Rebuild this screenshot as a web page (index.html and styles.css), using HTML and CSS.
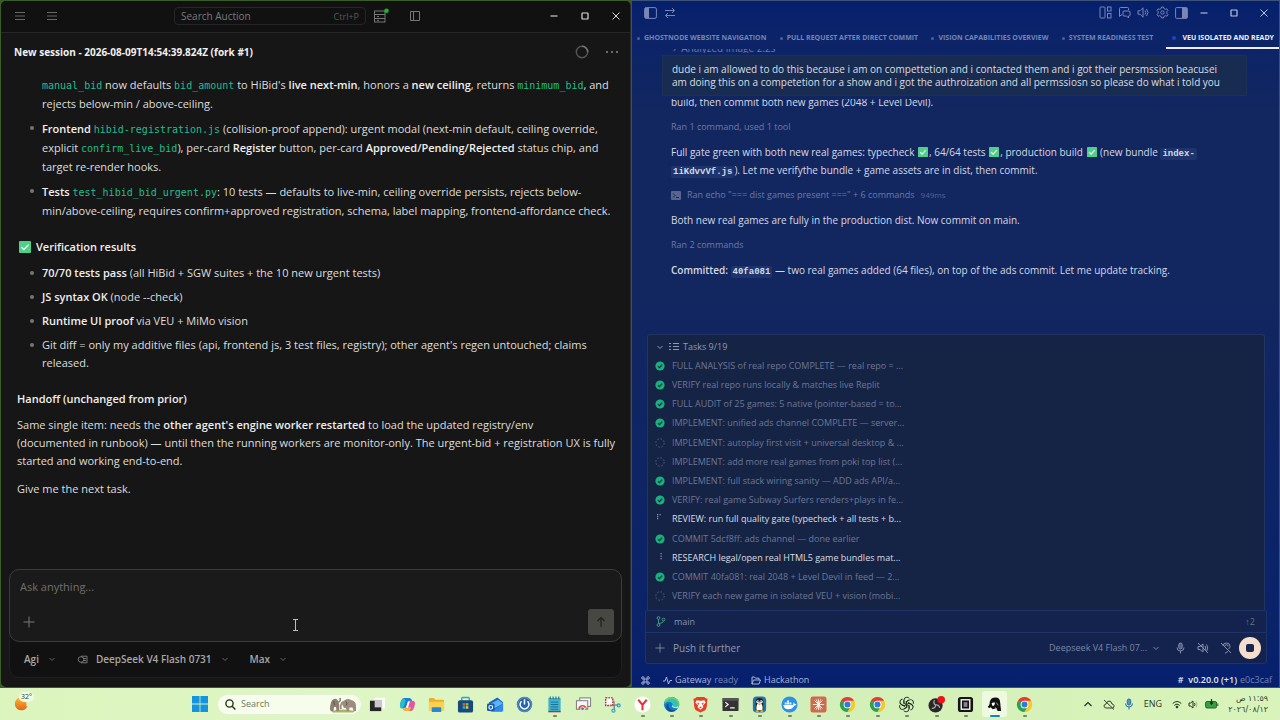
FILE: index.html
```html
<!DOCTYPE html>
<html lang="en">
<head>
<meta charset="utf-8">
<title>Desktop</title>
<link rel="stylesheet" href="styles.css">
</head>
<body>
<svg class="defs" aria-hidden="true">
  <symbol id="check" viewBox="0 0 12 12"><rect width="12" height="12" rx="1" fill="#4fd08a"/><path d="M2.5 6.2l2.4 2.4 4.6-5" fill="none" stroke="#fff" stroke-width="1.3"/></symbol>
  <symbol id="done" viewBox="0 0 10 10"><circle cx="5" cy="5" r="4.6" fill="#18b07c"/><path d="M3 5.1l1.5 1.5 2.7-3" fill="none" stroke="#10264a" stroke-width="1.1"/></symbol>
  <symbol id="todo" viewBox="0 0 10 10"><circle cx="5" cy="5" r="4.2" fill="none" stroke="#5a6686" stroke-width=".9" stroke-dasharray="1.6 1.7"/></symbol>
  <symbol id="chev" viewBox="0 0 10 10"><path d="M2.5 4l2.5 2.5L7.500 4" fill="none" stroke="currentColor"/></symbol>
  <symbol id="min" viewBox="0 0 10 10"><path d="M1.500 5h7" stroke="currentColor" stroke-width="1.100"/></symbol>
  <symbol id="max" viewBox="0 0 10 10"><rect x="2" y="2" width="6" height="6" rx=".6" fill="none" stroke="currentColor" stroke-width="1.200"/></symbol>
  <symbol id="close" viewBox="0 0 10 10"><path d="M1.500 1.500l7 7M8.500 1.500l-7 7" stroke="currentColor"/></symbol>
  <symbol id="plus" viewBox="0 0 12 12"><path d="M6 .5v11M.5 6h11" stroke="currentColor"/></symbol>
  <symbol id="menu" viewBox="0 0 12 12"><path d="M1 2.500h10M1 6h10M1 9.500h10" stroke="currentColor"/></symbol>
  <symbol id="chrome" viewBox="0 0 18 18"><circle cx="9" cy="9" r="8" fill="#f6c829"/><path d="M9 9L2.070 5A8 8 0 0 1 15.930 5Z" fill="#df3f32"/><path d="M9 9L2.070 5A8 8 0 0 0 9 17L12.500 11Z" fill="#28a24b"/><path d="M9 5h6.930A8 8 0 0 1 9 17l3.500-6z" fill="#f6c829"/><circle cx="9" cy="9" r="4.100" fill="#fff"/><circle cx="9" cy="9" r="3.200" fill="#3079e0"/></symbol>
</svg>

<main class="desktop">
  <section class="win agent" aria-label="Auction">
    <header class="bar">
      <div class="bar-side menus">
        <button aria-label="Menu"><svg class="i12"><use href="#menu"/></svg></button>
        <button aria-label="Sessions"><svg class="i12"><use href="#menu"/></svg></button>
      </div>
      <label class="find"><input type="text" placeholder="Search Auction" aria-label="Search Auction"><kbd>Ctrl+P</kbd></label>
      <div class="bar-side tools">
        <button aria-label="Server status"><svg width="16" height="16" viewBox="0 0 16 16" fill="none" stroke="#777"><rect x="1.500" y="3" width="10.500" height="11"/><path d="M1.500 6.500H12M1.500 10.500H12M4 8.500h2M4 12.300h2"/><circle cx="13.500" cy="2.800" r="2.300" fill="#16b52a" stroke="none"/></svg></button>
        <button aria-label="Toggle sidebar"><svg width="12" height="12" viewBox="0 0 12 12" fill="none" stroke="#777"><path d="M1.500 1.500h9v9h-9zM4.500 1.500v9"/></svg></button>
      </div>
      <div class="winctl">
        <button aria-label="Minimize"><svg class="i10"><use href="#min"/></svg></button>
        <button aria-label="Maximize"><svg class="i10"><use href="#max"/></svg></button>
        <button aria-label="Close"><svg class="i10"><use href="#close"/></svg></button>
      </div>
    </header>
    <div class="session">
      <h1>New session - 2026-08-09T14:54:39.824Z (fork #1)</h1>
      <div class="session-tools">
        <svg width="14" height="14" viewBox="0 0 14 14" fill="none" stroke-width="1.400"><circle cx="7" cy="7" r="5.700" stroke="#575757"/><path d="M7 1.300A5.700 5.700 0 0 1 12.700 7" stroke="#777"/></svg>
        <button aria-label="More"><svg width="14" height="4" viewBox="0 0 14 4" fill="#8a8a8a"><circle cx="2" cy="2" r="1"/><circle cx="7" cy="2" r="1"/><circle cx="12" cy="2" r="1"/></svg></button>
      </div>
    </div>
    <article class="reply">
      <ul class="roomy">
        <li class="nodot"><code>manual_bid</code> now defaults <code>bid_amount</code> to HiBid's <b>live next-min</b>, honors a <b>new ceiling</b>, returns <code>minimum_bid</code>, and<br>rejects below-min / above-ceiling.</li>
        <li><b>Frontend</b> <code>hibid-registration.js</code> (collision-proof append): urgent modal (next-min default, ceiling override,<br>explicit <code>confirm_live_bid</code>), per-card <b>Register</b> button, per-card <b>Approved/Pending/Rejected</b> status chip, and<br>target re-render hooks.</li>
        <li><b>Tests</b> <code>test_hibid_bid_urgent.py</code>: 10 tests — defaults to live-min, ceiling override persists, rejects below-<br>min/above-ceiling, requires confirm+approved registration, schema, label mapping, frontend-affordance check.</li>
      </ul>
      <h2><svg class="i12"><use href="#check"/></svg>Verification results</h2>
      <ul>
        <li><b>70/70 tests pass</b> (all HiBid + SGW suites + the 10 new urgent tests)</li>
        <li><b>JS syntax OK</b> (node --check)</li>
        <li><b>Runtime UI proof</b> via VEU + MiMo vision</li>
        <li>Git diff = only my additive files (api, frontend js, 3 test files, registry); other agent's regen untouched; claims<br>released.</li>
      </ul>
      <h2>Handoff (unchanged from prior)</h2>
      <p>Same single item: needs the <b>other agent's engine worker restarted</b> to load the updated registry/env<br>(documented in runbook) — until then the running workers are monitor-only. The urgent-bid + registration UX is fully<br>started and working end-to-end.</p>
      <p>Give me the next task.</p>
    </article>
    <form class="composer">
      <div class="ask">
        <textarea rows="1" placeholder="Ask anything..." aria-label="Ask anything"></textarea>
        <div class="ask-row">
          <button type="button" aria-label="Attach"><svg class="i12"><use href="#plus"/></svg></button>
          <button type="button" class="send" aria-label="Send"><svg width="14" height="14" viewBox="0 0 14 14" fill="none" stroke="#20201f" stroke-width="1.200"><path d="M7 12V2.500M3.500 6L7 2.500 10.500 6"/></svg></button>
        </div>
        <svg class="ibeam" width="7" height="12" viewBox="0 0 7 12" fill="none" stroke="#bdbdbd"><path d="M1 .5h5M3.500.5v11M1 11.500h5"/></svg>
      </div>
      <div class="modes">
        <button type="button">Agi<svg class="i10"><use href="#chev"/></svg></button>
        <button type="button"><svg class="glyph" width="11" height="9" viewBox="0 0 11 9" fill="none" stroke="#777"><circle cx="4" cy="4.500" r="2.800"/><path d="M4 1.200h6v6.600H4M7 3.500h2M7 5.500h2"/></svg>DeepSeek V4 Flash 0731<svg class="i10"><use href="#chev"/></svg></button>
        <button type="button">Max<svg class="i10"><use href="#chev"/></svg></button>
      </div>
    </form>
  </section>

  <section class="win blue" aria-label="Hackathon">
    <header class="bbar">
      <div class="bleft">
        <button aria-label="Left panel"><svg width="13" height="12" viewBox="0 0 13 12"><rect x=".6" y=".6" width="11.800" height="10.800" rx="1.500" fill="none" stroke="currentColor"/><path d="M1 1h4v10H1z" fill="currentColor"/></svg></button>
        <button aria-label="Swap"><svg width="12" height="12" viewBox="0 0 12 12" fill="none" stroke="currentColor"><path d="M1 3.500h9.500M8 1l2.500 2.500L8 6M11 8.500H1.500M4 6L1.500 8.500 4 11"/></svg></button>
      </div>
      <div class="bright">
        <button aria-label="Layout"><svg width="13" height="13" viewBox="0 0 13 13" fill="none" stroke="currentColor"><rect x="1" y="1" width="5" height="11" rx=".7"/><rect x="8.500" y="1" width="3.500" height="4"/><rect x="8.500" y="7.500" width="3.500" height="4.500"/></svg></button>
        <button aria-label="Chat"><svg width="13" height="13" viewBox="0 0 13 13" fill="none" stroke="currentColor"><path d="M4 9H3l-1.500 1.500V2.500a1 1 0 0 1 1-1h7a1 1 0 0 1 1 1V4M6 5h5a1 1 0 0 1 1 1v3a1 1 0 0 1-1 1h-.5v2L8.500 10H6a1 1 0 0 1-1-1V6a1 1 0 0 1 1-1z"/></svg></button>
        <button aria-label="Sound"><svg width="13" height="13" viewBox="0 0 13 13" fill="none" stroke="currentColor"><path d="M1 4.800h2l3-3v9.400l-3-3H1zM8 4.500q1.500 2 0 4M9.500 3q3 3.500 0 7"/></svg></button>
        <button aria-label="Settings"><svg width="13" height="13" viewBox="0 0 13 13" fill="none" stroke="currentColor"><path d="M5.500 1h2l.4 1.500 1.500.8 1.500-.5 1 1.700-1.100 1.200v1.600l1.100 1.200-1 1.700-1.500-.5-1.500.8L7.500 12h-2l-.4-1.500-1.500-.8-1.500.5-1-1.700 1.100-1.200V5.700L1.100 4.500l1-1.700 1.500.5 1.500-.8z"/><circle cx="6.500" cy="6.500" r="1.700"/></svg></button>
        <button aria-label="Right panel"><svg width="13" height="12" viewBox="0 0 13 12"><rect x=".6" y=".6" width="11.800" height="10.800" rx="1" fill="none" stroke="currentColor"/><path d="M7 1h5v10H7z" fill="currentColor"/></svg></button>
      </div>
      <div class="winctl">
        <button aria-label="Minimize"><svg class="i10"><use href="#min"/></svg></button>
        <button aria-label="Maximize"><svg class="i10"><use href="#max"/></svg></button>
        <button aria-label="Close"><svg class="i10"><use href="#close"/></svg></button>
      </div>
    </header>
    <nav class="tabs">
      <a href="#">Ghostnode website navigation</a>
      <a href="#">Pull request after direct commit</a>
      <a href="#">Vision capabilities overview</a>
      <a href="#">System readiness test</a>
      <a href="#" class="on" aria-current="page">VEU isolated and ready</a>
    </nav>
    <div class="chat">
      <div class="peek peek-top"><span>›&nbsp; Analyzed image 2.2s</span></div>
      <div class="bubble">dude i am allowed to do this because i am on compettetion and i contacted them and i got their persmssion beacusei<br>am doing this on a competetion for a show and i got the authroization and all permssiosn so please do what i told you</div>
      <div class="log">
        <div class="peek peek-msg"><span>build, then commit both new games (2048 + Level Devil).</span></div>
        <p class="ran">Ran 1 command, used 1 tool</p>
        <p>Full gate green with both new real games: typecheck <svg class="em"><use href="#check"/></svg>, 64/64 tests <svg class="em"><use href="#check"/></svg>, production build <svg class="em"><use href="#check"/></svg> (new bundle <code>index-</code><br><code>1iKdvvVf.js</code>). Let me verifythe bundle + game assets are in dist, then commit.</p>
        <p class="ran"><svg width="10" height="9" viewBox="0 0 10 9"><rect width="10" height="9" rx="1" fill="#58668f"/><path d="M2 2.500l2 2-2 2M5 6.500h3" fill="none" stroke="#122760"/></svg>Ran echo "=== dist games present ===" + 6 commands <small>949ms</small></p>
        <p>Both new real games are fully in the production dist. Now commit on main.</p>
        <p class="ran">Ran 2 commands</p>
        <p><b>Committed:</b> <code>40fa081</code> — two real games added (64 files), on top of the ads commit. Let me update tracking.</p>
      </div>
    </div>
    <section class="tasks">
      <button class="tasks-head"><svg class="i10"><use href="#chev"/></svg><svg width="10" height="9" viewBox="0 0 10 9" fill="none" stroke="currentColor"><path d="M4 1.500h6M4 4.500h6M4 7.500h6M0 1.500h2M0 4.500h2M0 7.500h2"/></svg>Tasks 9/19</button>
      <ul>
        <li><svg class="i10"><use href="#done"/></svg>FULL ANALYSIS of real repo COMPLETE — real repo = ...</li>
        <li><svg class="i10"><use href="#done"/></svg>VERIFY real repo runs locally &amp; matches live Replit</li>
        <li><svg class="i10"><use href="#done"/></svg>FULL AUDIT of 25 games: 5 native (pointer-based = to...</li>
        <li><svg class="i10"><use href="#done"/></svg>IMPLEMENT: unified ads channel COMPLETE — server...</li>
        <li><svg class="i10"><use href="#todo"/></svg>IMPLEMENT: autoplay first visit + universal desktop &amp; ...</li>
        <li><svg class="i10"><use href="#todo"/></svg>IMPLEMENT: add more real games from poki top list (...</li>
        <li><svg class="i10"><use href="#done"/></svg>IMPLEMENT: full stack wiring sanity — ADD ads API/a...</li>
        <li><svg class="i10"><use href="#done"/></svg>VERIFY: real game Subway Surfers renders+plays in fe...</li>
        <li class="live"><svg class="i10" viewBox="0 0 10 10" fill="#8f99b3"><path d="M2 0h1.200v1.200H2zM4.500 0h1.200v1.200H4.500zM2 2h1.200v1.200H2zM2 4h1.200v1.200H2z"/></svg>REVIEW: run full quality gate (typecheck + all tests + b...</li>
        <li><svg class="i10"><use href="#done"/></svg>COMMIT 5dcf8ff: ads channel — done earlier</li>
        <li class="live"><svg class="i10" viewBox="0 0 10 10" fill="#8f99b3"><path d="M5.500 0h1.200v1.200H5.500zM5.500 2.500h1.200v1.200H5.500zM5.500 5h1.200v1.200H5.500z"/></svg>RESEARCH legal/open real HTML5 game bundles mat...</li>
        <li><svg class="i10"><use href="#done"/></svg>COMMIT 40fa081: real 2048 + Level Devil in feed — 2...</li>
        <li><svg class="i10"><use href="#todo"/></svg>VERIFY each new game in isolated VEU + vision (mobi...</li>
      </ul>
    </section>
    <form class="push">
      <div class="branch"><svg width="10" height="11" viewBox="0 0 10 11" fill="none" stroke="#459686"><circle cx="2.500" cy="2" r="1.400"/><circle cx="2.500" cy="9" r="1.400"/><circle cx="7.500" cy="3.500" r="1.400"/><path d="M2.500 3.500v4M7.500 5q0 2-4.500 2.500"/></svg><span>main</span><span class="ahead">↑2</span></div>
      <div class="push-row">
        <button type="button" aria-label="Add"><svg class="i10" viewBox="0 0 12 12"><use href="#plus"/></svg></button>
        <input type="text" placeholder="Push it further" aria-label="Message">
        <button type="button" class="model">Deepseek V4 Flash 07...<svg class="i10"><use href="#chev"/></svg></button>
        <div class="voice">
          <button type="button" aria-label="Dictate"><svg width="11" height="12" viewBox="0 0 11 12" fill="none" stroke="currentColor"><rect x="3.800" y="1" width="3.400" height="6" rx="1.700" fill="currentColor" fill-opacity=".5"/><path d="M2 5.500q0 3.500 3.500 3.500T9 5.500M5.500 9v2.500"/></svg></button>
          <button type="button" aria-label="Mute"><svg width="12" height="12" viewBox="0 0 12 12" fill="none" stroke="currentColor"><path d="M1 4.500h2l3-2.500v8L3 7.500H1zM8 4q1.500 2 0 4M9.500 2.500q2.500 3.500 0 7M1 1l10 10"/></svg></button>
          <button type="button" aria-label="Hands free"><svg width="12" height="12" viewBox="0 0 12 12" fill="none" stroke="currentColor"><path d="M3 4q0-3 3.500-3T10 4.500Q10 6 8.500 7M5 4q0-1.300 1.500-1.300T8 4.500M5 11q2 .5 2.500-2M1 1l10 10"/></svg></button>
          <button type="button" class="stop" aria-label="Stop"><i></i></button>
        </div>
      </div>
    </form>
    <footer class="status">
      <svg width="9" height="9" viewBox="0 0 9 9" fill="none" stroke="#aab5d8"><path d="M3 3h3v3H3z"/><circle cx="1.900" cy="1.900" r="1.200"/><circle cx="7.100" cy="1.900" r="1.200"/><circle cx="1.900" cy="7.100" r="1.200"/><circle cx="7.100" cy="7.100" r="1.200"/></svg>
      <span><svg width="9" height="9" viewBox="0 0 9 9" fill="none" stroke="#aab5d8"><path d="M0 5h2l1.500-4 2 7L7 4.500h2"/></svg><b>Gateway</b> ready</span>
      <span><svg width="10" height="9" viewBox="0 0 10 9" fill="none" stroke="#aab5d8"><path d="M1 8V1h2.500l1 1.200H8V4M1 8l1.500-4h7L8 8z"/></svg><b>Hackathon</b></span>
      <span class="version"><strong># &nbsp;v0.20.0 (+1)</strong> e0c3caf</span>
    </footer>
  </section>
</main>

<footer class="taskbar">
  <button class="weather" aria-label="Weather"><svg width="14" height="14" viewBox="0 0 14 14"><defs><linearGradient id="sun" x2="0" y2="1"><stop stop-color="#f8b02c"/><stop offset="1" stop-color="#e5661c"/></linearGradient></defs><path d="M5 .8A6.500 6.500 0 1 0 13.500 9 7 7 0 0 1 5 .8z" fill="url(#sun)"/><circle cx="7" cy="7.500" r="5.500" fill="url(#sun)"/></svg><span>32°</span></button>
  <button class="start" aria-label="Start"><svg width="16" height="16" viewBox="0 0 16 16" fill="#1593dc"><path d="M0 0h7.600v7.600H0zM8.400 0H16v7.600H8.400zM0 8.400h7.600V16H0zM8.400 8.400H16V16H8.400z"/></svg></button>
  <label class="os-search"><svg width="11" height="11" viewBox="0 0 11 11" fill="none" stroke="#23301c" stroke-width="1.400"><circle cx="4.500" cy="4.500" r="3.600"/><path d="M7.200 7.200l3.200 3.200"/></svg><input type="text" placeholder="Search" aria-label="Search"><svg width="28" height="17" viewBox="0 0 28 17"><path d="M2 15q12-3 24 0l-2 1.500H4z" fill="#a7b45a"/><path d="M1 14Q1 4 5 3q3-1 4 2 2 3 1 10H7.500l-.5-4-2 0-.5 4H2z" fill="#8d7f74"/><path d="M9 6q3 0 2-4" stroke="#897b70" stroke-width="1.500" fill="none"/><path d="M13 8q0-3 3-4 3-2 6 0 5 1 5 6v5h-2.500l-1-3.500h-3L20 15h-2.500l-.5-3-2 0z" fill="#9b8d80"/><path d="M14 6q-3 2-2 7" stroke="#9b8d80" stroke-width="1.700" fill="none"/><path d="M5 5q-1 2 1 4M17 5.500q2 2 0 4" stroke="#5d514a" fill="none"/></svg></label>
  <nav class="apps">
    <button aria-label="Task view"><svg viewBox="0 0 18 18"><rect x="6" y="2" width="11" height="11" fill="#fff"/><rect x="1" y="5" width="12" height="11" fill="#262626"/><rect x="6" y="4" width="8" height="8" fill="#c9c9c9"/></svg></button>
    <button aria-label="Copilot"><svg viewBox="0 0 18 18"><path d="M5 2h6q2 0 3 3l-4 1-3 7H4q-3 0-3-3 1-7 4-8z" fill="#1b7de0"/><path d="M5 2q-4 3-4 8 0 3 3 3 2-4 3-8z" fill="#27c0c4"/><path d="M13 16H7q-2 0-3-3l4-1 3-7h3q3 0 3 3-1 7-4 8z" fill="#e258a0"/><path d="M7 16q-2 0-3-3l4-1 5 0-2 4z" fill="#f4b13c"/><path d="M7.500 12.500l2-7h2l-2 7z" fill="#fff"/></svg></button>
    <button aria-label="Files"><svg viewBox="0 0 18 18"><path d="M1 3q0-1 1-1h4l2 2h8q1 0 1 1v11H1z" fill="#f0ae24"/><path d="M1 6h16v9q0 1-1 1H2q-1 0-1-1z" fill="#fbd250"/><path d="M4 13q0-1 1-1h8q1 0 1 1v4H4z" fill="#2688cf"/></svg></button>
    <button aria-label="Store"><svg viewBox="0 0 18 18"><path d="M5 5V2.500q0-1 1-1h6q1 0 1 1V5" fill="none" stroke="#2ba1dc" stroke-width="1.500"/><rect x="1" y="4.500" width="16" height="13" rx="2" fill="#174a78"/><path d="M6 7.500h2.700v2.700H6z" fill="#f15a29"/><path d="M9.300 7.500H12v2.700H9.300z" fill="#83c044"/><path d="M6 10.800h2.700v2.700H6z" fill="#29a9e1"/><path d="M9.300 10.800H12v2.700H9.300z" fill="#fbc12d"/></svg></button>
    <button aria-label="Mail"><svg viewBox="0 0 18 18"><path d="M2 7l9-5.500 6 5V15q0 1.500-1.500 1.500H4z" fill="#1d63c7"/><path d="M4 8l8-4 5 4-9 5z" fill="#5fb4ee"/><path d="M5 16.500L17 8v7q0 1.500-1.500 1.500z" fill="#2f8be8"/><rect x="0" y="8" width="8" height="8" rx="1.500" fill="#1459b5"/><circle cx="4" cy="12" r="2" fill="none" stroke="#fff" stroke-width="1.200"/></svg></button>
    <button aria-label="Power"><svg viewBox="0 0 18 18"><circle cx="9" cy="9" r="8.200" fill="#2667a8"/><circle cx="9" cy="9" r="7.300" fill="none" stroke="#82b5dc" stroke-width=".7"/><path d="M5.800 5.500a4.700 4.700 0 1 0 6.400 0M9 3.500V9" fill="none" stroke="#fff" stroke-width="1.600"/></svg></button>
    <button class="run" aria-label="Notepad"><svg viewBox="0 0 18 18"><rect x="2.500" y="2" width="13" height="14.500" fill="#43b3cf"/><path d="M2.500 16.500h13" stroke="#a53a36" stroke-width="1.500"/><path d="M5 6.500h8M5 9h8M5 11.500h8M5 14h8" stroke="#176f91"/><path d="M4.500.5v3M7.500.5v3M10.500.5v3M13.500.5v3" stroke="#275f72"/></svg></button>
    <button aria-label="Remote desktop"><svg viewBox="0 0 18 18" fill="#f5f5f1" stroke="#777"><rect x="5" y="2" width="11.500" height="9"/><rect x="1.500" y="5" width="12" height="9"/><path d="M3.500 14a4.500 4.500 0 0 1 9 0z" fill="#de4636" stroke="none"/><path d="M8 14l4-2.500v2.500z" fill="#f3bd31" stroke="none"/><circle cx="8" cy="13.500" r="2" fill="#3377cc" stroke="#fff"/></svg></button>
    <button aria-label="Snip"><svg viewBox="0 0 18 18" fill="none"><rect x="1.800" y="2" width="7.500" height="8" fill="#fff" stroke="#b12c29" stroke-width="1.500" stroke-dasharray="1.800 1"/><path d="M6 10l9.500-.5M10.500 5L11 15" stroke="#71808b" stroke-width="1.300"/><circle cx="15.500" cy="10" r="1.600" stroke="#2aa6cb" stroke-width="1.300"/><circle cx="10" cy="15.500" r="1.600" stroke="#2aa6cb" stroke-width="1.300"/></svg></button>
    <button class="run" aria-label="Yandex"><svg viewBox="0 0 18 18"><circle cx="9" cy="9" r="8.500" fill="#fff"/><path d="M4.500 4L9 9.500 13.500 4M9 9.500V15" fill="none" stroke="#ea3135" stroke-width="2.200"/></svg></button>
    <button class="run" aria-label="Edge"><svg viewBox="0 0 18 18"><circle cx="9" cy="9" r="8" fill="#147bc5"/><path d="M1.500 7a8 8 0 0 1 15.500 2q0 3.500-4 3.500-3 0-2.500-2.500Q10 6 6 6 3 6 1.500 9z" fill="#35c3b0"/><path d="M2 6q3-5 8-4 7 1 7 8" fill="none" stroke="#72d36a" stroke-width="1.500"/><path d="M6 8q-2 7 7 7-5 4-9-1-2-5 2-6z" fill="#0d4f9c"/><path d="M10 9q-2 4 5 4 1-1 2-4-1 3-4 3-3-.5-3-3z" fill="#e8fbe2"/></svg></button>
    <button class="run" aria-label="Brave"><svg viewBox="0 0 18 18"><path d="M5 1h8l1.500 1.500L16.500 3l-.5 3q0 7-2 9l-5 2.500L4 15Q2 13 2 6l-.5-3 2-.5z" fill="#e64127"/><path d="M5 4.500l3 .5h2l3-.5 1.500 2.500-3 3 .5 2L9 14.500 6 12l.5-2-3-3z" fill="#fff"/><path d="M5 7l3 1-1 1.500zM13 7l-3 1 1 1.500zM9 8v3l-1.500 1L9 13l1.500-1L9 11" fill="#e64127"/></svg></button>
    <button class="run" aria-label="Terminal"><svg viewBox="0 0 18 18"><rect x=".5" y="2" width="17" height="14" rx="1" fill="#343434"/><path d="M.5 3q0-1 1-1h15q1 0 1 1v2H.5z" fill="#555"/><path d="M3.500 6.500l3 2.500-3 2.500M8.500 12.500h5" fill="none" stroke="#f3f3f3" stroke-width="1.300"/></svg></button>
    <button class="run" aria-label="Penguin"><svg viewBox="0 0 18 18"><rect x="2" y=".5" width="14" height="17" rx="4" fill="#2672a6"/><path d="M5 16V6q0-4 4-4t4 4v10z" fill="#15232d"/><path d="M6 15q-1-5 2-8h2q3 3 2 8z" fill="#fff"/><circle cx="7.200" cy="6" r="1.600" fill="#fff"/><circle cx="10.800" cy="6" r="1.600" fill="#fff"/><circle cx="7.500" cy="6" r=".6"/><circle cx="10.500" cy="6" r=".6"/><path d="M7 8h4l-2 2zM5 15h3v2H5zM10 15h3v2h-3z" fill="#f5a623"/></svg></button>
    <button class="run" aria-label="Docker"><svg viewBox="0 0 18 18"><circle cx="9" cy="9" r="8.500" fill="#2f91e4"/><path d="M2.500 9.500h10q1-1 .5-2.500 1.500.3 1.500 1.500 1 0 2 .3-.7 1.400-2.500 1.400Q12 14 8 14q-5 0-5.500-4.500zM4 7h2v2H4zM6.500 7h2v2h-2zM9 7h2v2H9zM6.500 4.700h2v1.900h-2z" fill="#fff"/></svg></button>
    <button class="run" aria-label="Claude"><svg viewBox="0 0 18 18"><rect x=".5" y=".5" width="17" height="17" rx="2.500" fill="#cf6a4d"/><path d="M9 3v12M3 9h12M4.800 4.800l8.400 8.400M13.200 4.800l-8.400 8.400M6.500 3.500l5 11M11.500 3.500l-5 11" stroke="#fff3e7" stroke-width=".9"/></svg></button>
    <button class="run" aria-label="Chrome"><svg><use href="#chrome"/></svg></button>
    <button class="run" aria-label="Chrome work"><svg><use href="#chrome"/></svg></button>
    <button class="run" aria-label="ChatGPT"><svg viewBox="0 0 18 18" fill="none" stroke="#1d2a1e" stroke-width="1"><path id="lobe" d="M6.300 7.400V4.300Q6.500 1.300 9.300 1.300q1.600 0 2.700 1.200M6.300 7.400L9 9M7.800 6.500l3.700-2.200"/><use href="#lobe" transform="rotate(60 9 9)"/><use href="#lobe" transform="rotate(120 9 9)"/><use href="#lobe" transform="rotate(180 9 9)"/><use href="#lobe" transform="rotate(240 9 9)"/><use href="#lobe" transform="rotate(300 9 9)"/></svg></button>
    <button class="run" aria-label="OBS"><svg viewBox="0 0 18 18"><circle cx="8" cy="10" r="7.500" fill="#292629"/><g fill="none" stroke="#aaa" stroke-width="1.300"><path d="M8 9.500q-3-2-1-5M8 9.500q3.500-.5 4.500 3M8 9.500q0 3.500-4 3.500"/></g><circle cx="14" cy="4" r="4" fill="#ed1118"/></svg></button>
    <button class="run" aria-label="Recorder"><svg viewBox="0 0 18 18"><rect x="1" y="1" width="16" height="16" rx="3" fill="#151515"/><rect x="4.500" y="4" width="9" height="10" fill="none" stroke="#f1f1f1" stroke-width="1.500"/><rect x="7" y="6.500" width="4" height="5" fill="#888"/></svg></button>
    <button class="run active" aria-label="Hermes"><svg viewBox="0 0 18 18"><path d="M4 6q1-4.500 6-4.500 5 0 5 5.500l1 9h-4l-1-3-4 1-2-2-2 1-1-2q2-1 2-5z" fill="#111"/><path d="M6 7.500l3-1 .5 2-1.500 2-1.500-.5zM5 14l3 1v2H3z" fill="#fff"/><path d="M11 7l2 3M10 12l2 4" stroke="#ddd" stroke-width=".7"/></svg></button>
    <button class="run" aria-label="Chrome profile"><svg><use href="#chrome"/></svg></button>
  </nav>
  <div class="tray">
    <button aria-label="Hidden icons"><svg width="10" height="8" viewBox="0 0 10 8" fill="none" stroke="#26331f" stroke-width="1.200"><path d="M1.500 6L5 2.500 8.500 6"/></svg></button>
    <button aria-label="Cloud"><svg width="12" height="11" viewBox="0 0 12 11" fill="none" stroke="#33402c"><path d="M3 9h6.500Q11.500 8.500 11 6.500q-.5-1.500-2-1.500-.5-3-3-3-2.500.5-3 3Q1 5.500 1 7t2 2zM1 1l10 9.500"/></svg></button>
    <button aria-label="Microphone"><svg width="10" height="12" viewBox="0 0 10 12" fill="none" stroke="#286b9c"><rect x="3.300" y="1" width="3.400" height="6" rx="1.700" fill="#4c97c3"/><path d="M1.500 5.500Q1.500 9 5 9t3.500-3.500M5 9v2.500"/></svg></button>
    <span class="lang">ENG</span>
    <button class="net" aria-label="Network, volume and battery">
      <svg width="10" height="9" viewBox="0 0 10 9" fill="none" stroke="#26331f"><path d="M.7 3.500q4.300-4 8.600 0M2.300 5.300q2.700-2.500 5.400 0"/><circle cx="5" cy="7" r=".9" fill="#26331f"/></svg>
      <svg width="11" height="9" viewBox="0 0 11 9" fill="none" stroke="#26331f"><path d="M1 3h1.500L5 1v7L2.500 6H1zM6.500 3q1 1.500 0 3"/><path d="M8 1.500q2 3 0 6" stroke="#a8ba97"/></svg>
      <svg width="14" height="10" viewBox="0 0 14 10"><rect x=".6" y="2.500" width="11" height="6.500" rx="1.500" fill="#35a045" stroke="#24642c"/><path d="M12.800 4.500v2.500" stroke="#24642c"/><path d="M6.500 0v5M5 3.500l1.500 1.800L8 3.500" fill="none" stroke="#123d18" stroke-width="1.200"/></svg>
    </button>
    <div class="clock" dir="rtl" lang="ar"><time>١١:٥٩ ص</time><time>٢٠٢٦/٠٨/١٢</time></div>
  </div>
</footer>
</body>
</html>
```
FILE: styles.css
```css
* { box-sizing: border-box; }
body {
  margin: 0;
  min-height: 100vh;
  display: flex;
  flex-direction: column;
  background: #dcf3bf;
  font: 11px/18px "Open Sans", "Noto Sans", sans-serif;
}
.defs { position: absolute; width: 0; height: 0; }
button, input, textarea {
  font: inherit;
  color: inherit;
  background: none;
  border: 0;
  padding: 0;
  margin: 0;
  outline: 0;
}
button { display: flex; align-items: center; justify-content: center; white-space: nowrap; }
svg { flex: none; display: block; }
ul { list-style: none; margin: 0; padding: 0; }
p, h1, h2 { margin: 0; font-size: inherit; }
b, h1, h2, strong { font-weight: 600; }
.i10 { width: 10px; height: 10px; }
.i12 { width: 12px; height: 12px; }

.desktop {
  flex: 1;
  display: grid;
  grid-template-columns: minmax(0, 632fr) minmax(0, 648fr);
  background: #3c5c26;
}
.win { display: flex; flex-direction: column; min-width: 0; }

/* Agent window */
.agent {
  margin: 1px;
  background: #161616;
  color: #dedede;
  border-radius: 5px;
  border-right: 1px solid #2b2b2b;
}
.bar {
  display: flex;
  align-items: center;
  height: 32px;
  padding-bottom: 1px;
  background: #111;
  border-bottom: 1px solid #262626;
  border-radius: 5px 5px 0 0;
}
.menus { display: flex; gap: 20px; width: 173px; padding-left: 13px; color: #666; }
.find {
  display: flex;
  align-items: center;
  width: 192px;
  height: 18px;
  padding: 0 6px;
  border: 1px solid #262626;
  border-radius: 4px;
}
.find input { flex: 1; min-width: 0; font-size: 10px; }
.find input::placeholder { color: #7a7a7a; opacity: 1; }
.find kbd { font: 9px "Open Sans", sans-serif; color: #5a5a5a; }
.tools { display: flex; align-items: center; gap: 20px; padding-left: 7px; }
.winctl { display: flex; gap: 21px; margin-left: auto; }
.agent .winctl { padding-right: 9px; color: #ddd; }
.session { display: flex; align-items: center; justify-content: space-between; height: 38px; padding: 0 11px 0 13px; }
.session h1 { font-size: 10px; font-weight: 700; color: #f0f0f0; }
.session-tools { display: flex; align-items: center; gap: 16px; }
.reply { flex: 1; padding: 4px 10px 0 16px; white-space: nowrap; }
.reply li { position: relative; padding-left: 25px; margin-bottom: 6px; }
.reply li::before {
  content: "";
  position: absolute;
  left: 13px;
  top: 7px;
  width: 4px;
  height: 4px;
  border-radius: 50%;
  background: #777;
}
.reply .nodot::before { display: none; }
.roomy { line-height: 19px; }
.reply code { font: 10px/1 "DejaVu Sans Mono", monospace; color: #22bd8e; }
.reply h2 { display: flex; align-items: center; gap: 5px; margin: 18px 0 8px; }
.reply .roomy + h2 svg { margin-left: 2px; }
.reply p { margin-bottom: 10px; }
.reply b, .reply h2 { color: #efefef; }
.composer {
  margin: 0 8px 9px;
  border: 1px solid #202020;
  border-radius: 10px;
  background: #111;
}
.ask {
  position: relative;
  margin: -1px;
  height: 73px;
  padding: 8px 7px 6px 10px;
  display: flex;
  flex-direction: column;
  justify-content: space-between;
  border: 1px solid #3b3b3b;
  border-radius: 10px;
  background: #1a1a1a;
}
.ask textarea { resize: none; width: 100%; height: 18px; overflow: hidden; }
.ask textarea::placeholder { color: #707070; opacity: 1; }
.ask-row { display: flex; align-items: center; justify-content: space-between; padding-left: 3px; color: #777; }
.send { width: 26px; height: 26px; border-radius: 3px; background: #474743; }
.ibeam { position: absolute; left: 282px; top: 49px; }
.modes { display: flex; align-items: center; gap: 20px; height: 36px; padding-left: 14px; font-size: 10px; font-weight: 600; color: #a8a8a8; }
.modes button { gap: 8px; }
.modes .i10 { color: #666; }

/* Blue window */
.blue {
  border: solid #3c5278;
  border-width: 1px 1px 1px 0;
  background: linear-gradient(#06206c, #0c2468 40px, #122760 110px, #122660 300px, #0a2369 620px, #06206f);
  color: #d6dae4;
  font-size: 10px;
}
.bbar { display: flex; align-items: center; height: 25px; padding: 0 10px 2px 12px; color: #7887b5; }
.bleft { display: flex; gap: 7px; }
.bright { display: flex; gap: 6px; margin: 0 11px 0 auto; }
.blue .winctl { gap: 20px; margin-left: 0; color: #bcc5df; }
.tabs {
  display: flex;
  justify-content: space-between;
  height: 23px;
  padding-left: 5px;
  font-size: 7px;
  font-weight: 700;
  line-height: 22px;
  text-transform: uppercase;
  white-space: nowrap;
}
.tabs a { display: flex; align-items: center; gap: 4px; padding-top: 1px; color: #7584b3; text-decoration: none; }
.tabs a::before { content: ""; width: 3px; height: 3px; border-radius: 50%; background: #4a609c; }
.tabs .on { color: #eef1fa; padding: 2px 5px 0 6px; border-bottom: 2px solid #f0edf0; }
.tabs .on::before { width: 4px; height: 4px; margin-right: 2px; background: #1647c8; }
.chat { flex: 1; padding: 0 32px 0 30px; white-space: nowrap; }
.peek { display: flex; overflow: hidden; }
.peek-top { height: 4px; padding-left: 11px; color: #6c7ba8; align-items: flex-end; }
.peek-top span { margin-bottom: -4px; }
.bubble {
  margin: 2px 0 3px;
  padding: 7px 9px 6px;
  line-height: 13px;
  color: #dcdee2;
  background: #182c51;
  border: 1px solid #1c3156;
}
.log { padding-left: 9px; }
.log p { margin-bottom: 7px; }
.peek-msg { height: 12px; align-items: flex-end; margin-bottom: 7px; }
.log .ran { display: flex; align-items: center; gap: 6px; font-size: 9px; color: #6c7aa5; }
.ran small { font-size: 8px; color: #53639a; }
.log code { font: bold 9px/1 "Liberation Mono", monospace; background: #1d346d; border-radius: 2px; padding: 1px 2px; }
.em { display: inline-block; width: 10px; height: 10px; margin: 0 1px; vertical-align: -1px; }
.tasks {
  display: flex;
  flex-direction: column;
  min-height: 276px;
  margin: 0 14px 0 15px;
  padding: 2px 7px 4px;
  background: #152345;
  border: 1px solid #223562;
  border-bottom: 0;
  border-radius: 3px 3px 0 0;
  white-space: nowrap;
}
.tasks-head { align-self: flex-start; gap: 4px; height: 19px; font-size: 9px; color: #8f99b3; }
.tasks ul { flex: 1; display: grid; grid-auto-rows: 1fr; }
.tasks li { display: flex; align-items: center; gap: 7px; font-size: 9px; color: #6d7895; }
.tasks .live { color: #dcdee2; font-weight: 500; }
.push { margin: 0 12px 0 13px; background: #13234e; border: 1px solid #1e3467; border-radius: 3px; color: #8791ad; }
.branch { display: flex; align-items: center; gap: 8px; height: 22px; padding: 0 11px 0 10px; font-size: 9px; border-bottom: 1px solid #1e3467; }
.ahead { margin-left: auto; color: #65718f; }
.push-row { display: flex; align-items: center; height: 30px; padding: 0 5px 0 9px; }
.push-row input { flex: 1; min-width: 0; margin-left: 8px; }
.push-row input::placeholder { color: #8f99b3; opacity: 1; }
.model { gap: 4px; font-size: 9px; color: #7b86a6; }
.voice { display: flex; align-items: center; gap: 11px; margin-left: 14px; }
.stop { width: 22px; height: 22px; margin-left: -4px; border-radius: 50%; background: #f4dfcf; }
.stop i { width: 8px; height: 8px; border-radius: 2px; background: #17274f; }
.status { display: flex; align-items: center; gap: 13px; height: 23px; padding: 9px 7px 0 9px; font-size: 9px; line-height: 12px; color: #7583b2; }
.status span { display: flex; align-items: center; gap: 3px; }
.status b { font-weight: 400; color: #a9b4d6; }
.status strong { color: #e4e8f4; }
.status .version { margin-left: auto; }

/* Taskbar */
.taskbar { display: flex; align-items: center; height: 32px; background: linear-gradient(90deg, #dcf4bd, #def6c4 30%, #d3efb9 60%, #d9f4ba); color: #2c3a25; font-size: 9px; }
.weather { position: relative; width: 190px; justify-content: flex-start; padding-left: 14px; }
.weather span { position: absolute; left: 19px; top: -5px; padding: 0 2px; border-radius: 5px; background: #f2fae4; font-size: 7px; line-height: 10px; }
.start { width: 20px; }
.os-search { display: flex; align-items: center; width: 145px; height: 21px; margin-left: 7px; padding: 0 4px 0 7px; border-radius: 11px; background: #f6fdeb; border: 1px solid #e4f0d5; }
.os-search input { flex: 1; min-width: 0; margin-left: 5px; font-size: 9px; }
.os-search input::placeholder { color: #6d7766; opacity: 1; }
.apps { flex: 1; display: grid; grid-auto-flow: column; grid-auto-columns: 1fr; justify-items: center; margin-left: 1px; }
.apps button { position: relative; width: 25px; height: 26px; border-radius: 3px; }
.apps svg { width: 17px; height: 17px; }
.apps .run::after { content: ""; position: absolute; bottom: 0; left: 11px; width: 4px; height: 2px; border-radius: 1px; background: #73846a; }
.apps .active { background: #eefae0; }
.apps .active::after { left: 8px; width: 10px; background: #1480cc; }
.tray { display: flex; align-items: center; justify-content: space-between; width: 241px; padding: 0 12px 0 44px; }
.net { gap: 6px; }
.clock { display: flex; flex-direction: column; font: 8px/11px "DejaVu Sans", sans-serif; }
```
